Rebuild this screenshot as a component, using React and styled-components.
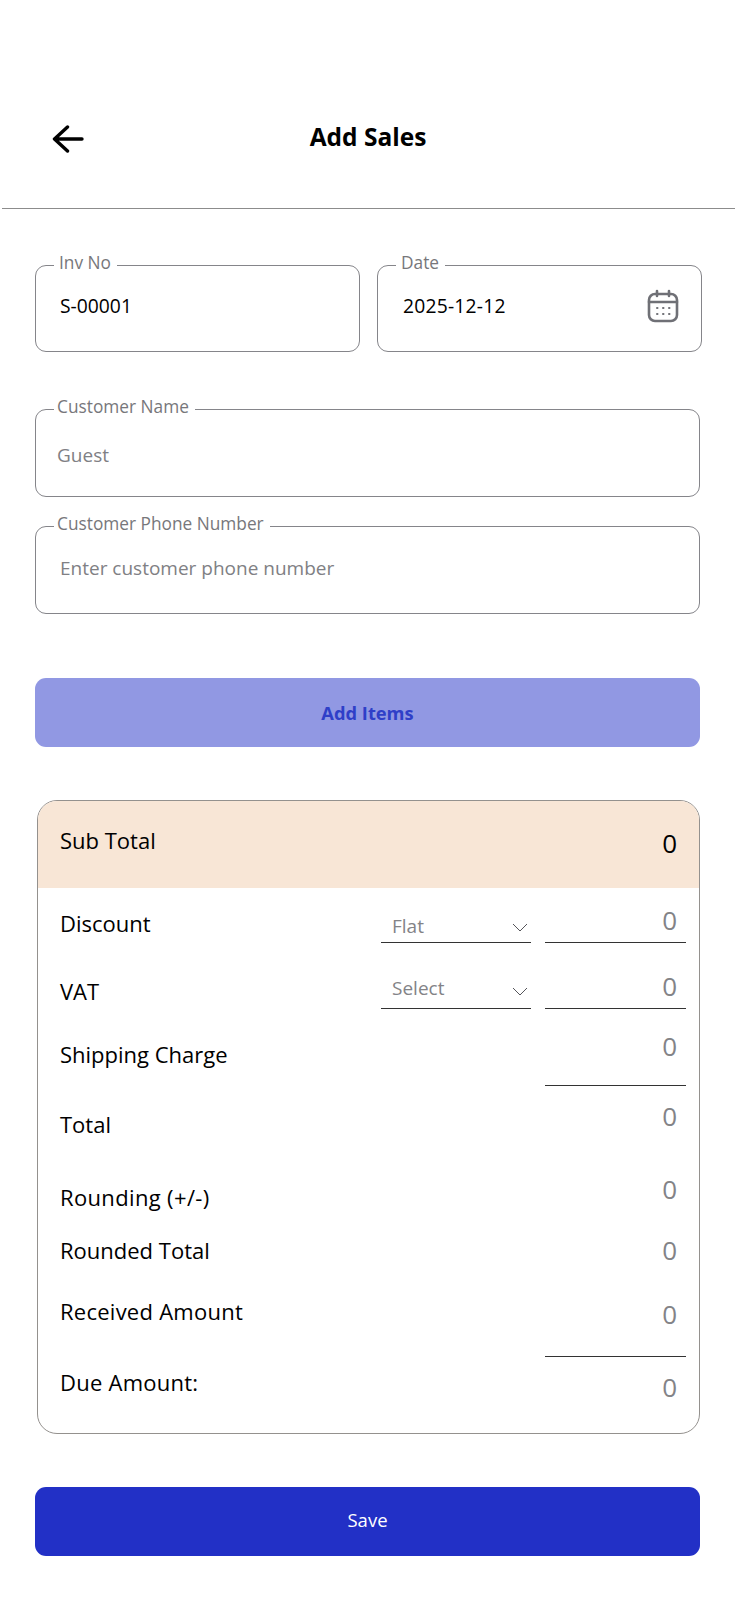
import React from 'react';
import styled, { createGlobalStyle } from 'styled-components';

const Global = createGlobalStyle`
  html, body { margin: 0; padding: 0; background: #fff; }
  * { box-sizing: border-box; }
  body { font-family: "Open Sans", "Noto Sans", sans-serif; color: #000; }
`;

const Page = styled.div`
  width: 735px;
  height: 1600px;
  overflow: hidden;
  background: #fff;
`;

const Header = styled.header`
  display: grid;
  grid-template-columns: 1fr auto 1fr;
  align-items: center;
  height: 209px;
  margin-left: 2px;
  padding: 108px 51px 41px 50px;
  border-bottom: 1px solid #8c8c8c;
`;

const BackButton = styled.div`
  display: flex;
  align-items: center;
  margin-top: 2px;
`;

const Title = styled.h1`
  margin: -2px 0 0;
  font-size: 24.5px;
  font-weight: 700;
  line-height: 32px;
`;

const Form = styled.main`
  display: flex;
  flex-direction: column;
  padding: 56px 35px 0;
`;

const TopFields = styled.div`
  display: grid;
  grid-template-columns: 325px 325px;
  gap: 17px;
  width: 667px;
  margin-bottom: 57px;
`;

const Field = styled.div`
  position: relative;
  display: flex;
  align-items: center;
  height: ${p => p.$height || 88}px;
  margin-bottom: ${p => p.$gap || 0}px;
  padding: ${p => p.$top || 0}px 0 ${p => p.$lift || 0}px ${p => p.$inset || 24}px;
  border: 1px solid #85858a;
  border-radius: 11px;
`;

const Legend = styled.span`
  position: absolute;
  top: -14px;
  left: ${p => p.$left}px;
  padding: 0 6px 0 ${p => p.$pad}px;
  background: #fff;
  font-size: 17.3px;
  line-height: 22px;
  color: #77777b;
`;

const FieldValue = styled.span`
  font-size: ${p => (p.$muted ? 19 : 19.3)}px;
  letter-spacing: ${p => p.$spacing || 0}px;
  color: ${p => (p.$muted ? '#808084' : '#000')};
`;

const CalendarIcon = styled.svg`
  position: absolute;
  right: 22px;
  top: 23px;
`;

const ButtonBase = styled.button`
  border: 0;
  border-radius: 11px;
  font-family: "Open Sans", sans-serif;
`;

const AddButton = styled(ButtonBase)`
  height: 69px;
  margin: 64px 0 53px;
  padding-bottom: 2px;
  background: #9198e3;
  color: #2f3fc8;
  font-size: 18.3px;
  font-weight: 700;
`;

const Card = styled.section`
  display: flex;
  flex-direction: column;
  width: 663px;
  height: 634px;
  margin-left: 2px;
  border: 1px solid #94918e;
  border-radius: 20px;
  overflow: hidden;
`;

const Band = styled.div`
  display: flex;
  justify-content: space-between;
  align-items: center;
  height: 87px;
  padding: 0 22px 8px 22px;
  background: #f8e6d6;
  font-size: 22px;
`;

const BandValue = styled.span`
  font-size: 26px;
  margin-top: 6px;
`;

const Row = styled.div`
  display: flex;
  align-items: flex-end;
  height: ${p => p.$height}px;
  padding: 0 13px 0 22px;
`;

const Label = styled.span`
  flex: 1;
  margin-bottom: ${p => p.$bottom}px;
  font-size: 22px;
  line-height: 30px;
  letter-spacing: ${p => p.$spacing || 0}px;
`;

const SelectBox = styled.div`
  display: flex;
  justify-content: space-between;
  align-items: flex-end;
  width: 150px;
  height: 40px;
  margin-right: 14px;
  padding: 0 3px ${p => p.$bottom}px 11px;
  border-bottom: 1px solid #333;
  font-size: 19px;
  line-height: 26px;
  color: #838387;
`;

const Chevron = styled.svg`
  margin-bottom: ${p => p.$bottom}px;
`;

const Amount = styled.div`
  width: 141px;
  padding: 0 9px ${p => p.$bottom}px 0;
  border-bottom: ${p => (p.$line ? '1px solid #333' : '0')};
  font-size: 26px;
  line-height: 30px;
  text-align: right;
  color: #838387;
`;

const SaveButton = styled(ButtonBase)`
  height: 69px;
  margin-top: 53px;
  padding-bottom: 5px;
  background: #2230c6;
  color: #fff;
  font-size: 18.5px;
`;

const ChevronDown = ({ bottom }) => (
  <Chevron $bottom={bottom} width="16" height="9" viewBox="0 0 16 9" fill="none" stroke="#55555a" strokeWidth="1">
    <path d="M1 1l7 7 7-7" />
  </Chevron>
);

const App = () => (
  <Page>
    <Global />
    <Header>
      <BackButton>
        <svg width="32" height="28" viewBox="0 0 32 28" fill="none" stroke="#000" strokeWidth="3.4" strokeLinecap="round" strokeLinejoin="round">
          <path d="M30 14H3M15.5 2L2.5 14l13 12" />
        </svg>
      </BackButton>
      <Title>Add Sales</Title>
    </Header>
    <Form>
      <TopFields>
        <Field $height={87} $lift={7}>
          <Legend $left={18} $pad={5}>Inv No</Legend>
          <FieldValue>S-00001</FieldValue>
        </Field>
        <Field $height={87} $lift={7} $inset={25}>
          <Legend $left={18} $pad={5}>Date</Legend>
          <FieldValue $spacing={0.2}>2025-12-12</FieldValue>
          <CalendarIcon width="32" height="34" viewBox="0 0 32 34" fill="none" stroke="#6f7076" strokeWidth="2.6" strokeLinecap="round">
            <rect x="2" y="5" width="28" height="27" rx="6" />
            <path d="M2 13h28M10 2v5M22 2v5" />
            <path d="M10 19h.5M16 19h.5M22 19h.5M10 25h.5M16 25h.5M22 25h.5" strokeWidth="2" />
          </CalendarIcon>
        </Field>
      </TopFields>
      <Field $gap={29} $inset={21} $top={4}>
        <Legend $left={18} $pad={3}>Customer Name</Legend>
        <FieldValue $muted>Guest</FieldValue>
      </Field>
      <Field $inset={24} $lift={4}>
        <Legend $left={18} $pad={3}>Customer Phone Number</Legend>
        <FieldValue $muted>Enter customer phone number</FieldValue>
      </Field>
      <AddButton>Add Items</AddButton>
      <Card>
        <Band>
          <span>Sub Total</span>
          <BandValue>0</BandValue>
        </Band>
        <Row $height={55}>
          <Label $bottom={5}>Discount</Label>
          <SelectBox $bottom={3}>Flat<ChevronDown bottom={7} /></SelectBox>
          <Amount $line $bottom={7}>0</Amount>
        </Row>
        <Row $height={66}>
          <Label $bottom={3}>VAT</Label>
          <SelectBox $bottom={7}>Select<ChevronDown bottom={5} /></SelectBox>
          <Amount $line $bottom={7}>0</Amount>
        </Row>
        <Row $height={77}>
          <Label $bottom={17}>Shipping Charge</Label>
          <Amount $line $bottom={24}>0</Amount>
        </Row>
        <Row $height={64}>
          <Label $bottom={10}>Total</Label>
          <Amount $bottom={18}>0</Amount>
        </Row>
        <Row $height={72}>
          <Label $bottom={9} $spacing={0.35}>Rounding (+/-)</Label>
          <Amount $bottom={17}>0</Amount>
        </Row>
        <Row $height={58}>
          <Label $bottom={14}>Rounded Total</Label>
          <Amount $bottom={14}>0</Amount>
        </Row>
        <Row $height={78}>
          <Label $bottom={31} $spacing={0.25}>Received Amount</Label>
          <Amount $line $bottom={27}>0</Amount>
        </Row>
        <Row $height={76}>
          <Label $bottom={36} $spacing={0.25}>Due Amount:</Label>
          <Amount $bottom={31}>0</Amount>
        </Row>
      </Card>
      <SaveButton>Save</SaveButton>
    </Form>
  </Page>
);

export default App;
